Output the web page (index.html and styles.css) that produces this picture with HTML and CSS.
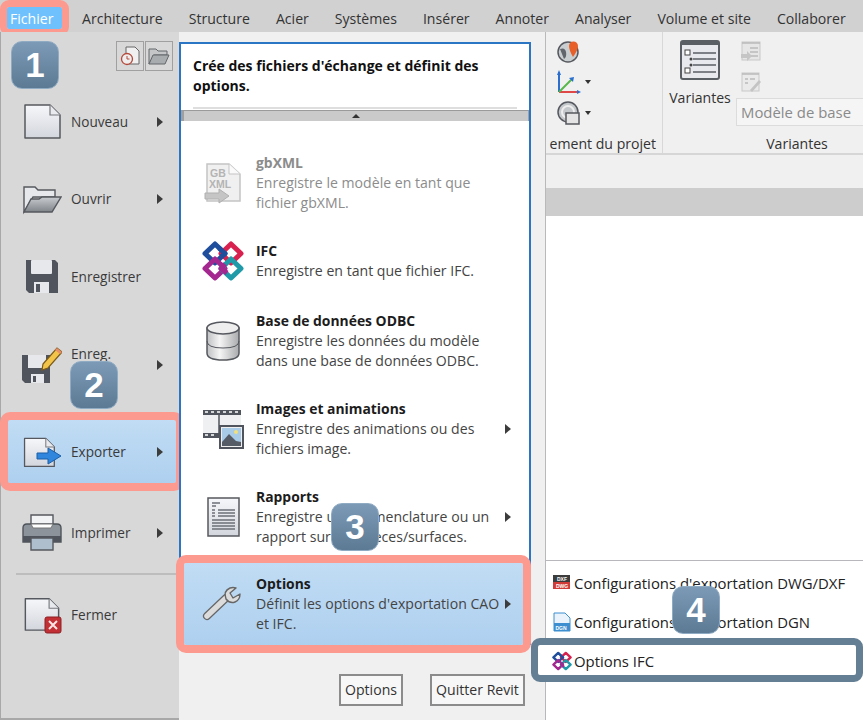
FILE: index.html
```html
<!DOCTYPE html>
<html lang="fr">
<head>
    <meta charset="utf-8">
    <title>Revit - Options IFC</title>
    <link rel="stylesheet" href="styles.css">
</head>
<body>
    <!-- Shared icon shapes -->
    <svg class="icon-defs" width="0" height="0">
        <defs>
            <linearGradient id="paper" x1="0" y1="0" x2="0" y2="1">
                <stop offset="0" stop-color="#f6f7fa"/>
                <stop offset="1" stop-color="#d3d6dd"/>
            </linearGradient>
            <linearGradient id="metal" x1="0" y1="0" x2="1" y2="0">
                <stop offset="0" stop-color="#bfc0c2"/>
                <stop offset="0.4" stop-color="#f5f5f5"/>
                <stop offset="1" stop-color="#a9aaac"/>
            </linearGradient>
            <linearGradient id="folder" x1="0" y1="0" x2="0" y2="1">
                <stop offset="0" stop-color="#c9ccd0"/>
                <stop offset="1" stop-color="#7f848a"/>
            </linearGradient>
            <symbol id="ifc" viewBox="0 0 42 42">
                <g fill="none" stroke-width="5" stroke-linejoin="round">
                    <path d="M13 4 23 13.500 13 23 3 13.500Z" stroke="#1f4e9c"/>
                    <path d="M29 4 39 13.500 29 23 19 13.500Z" stroke="#d9214f"/>
                    <path d="M13 19 23 28.500 13 38 3 28.500Z" stroke="#a3278f"/>
                    <path d="M29 19 39 28.500 29 38 19 28.500Z" stroke="#1e9aa8"/>
                    <path d="M17 8 23 13.500 19 17" stroke="#1f4e9c"/>
                    <path d="M25 33 19 28.500 23 24" stroke="#a3278f"/>
                </g>
            </symbol>
            <symbol id="doc" viewBox="0 0 40 40">
                <path d="M3 4H28L38 14V37H3Z" fill="url(#paper)" stroke="#55585e" stroke-width="1.500" stroke-linejoin="round"/>
                <path d="M28 4V14H38" fill="#e9eaee" stroke="#77797e" stroke-width="1.200"/>
            </symbol>
        </defs>
    </svg>

    <header class="tabs">
        <span class="tab tab-file">Fichier</span>
        <span class="tab">Architecture</span>
        <span class="tab">Structure</span>
        <span class="tab">Acier</span>
        <span class="tab">Systèmes</span>
        <span class="tab">Insérer</span>
        <span class="tab">Annoter</span>
        <span class="tab">Analyser</span>
        <span class="tab">Volume et site</span>
        <span class="tab">Collaborer</span>
    </header>

    <div class="workspace">
        <!-- Left column of the file menu -->
        <nav class="file-menu">
            <div class="recent-buttons">
                <span class="recent-button">
                    <svg width="24" height="24" viewBox="0 0 24 24"><path d="M8 3H17L21 7V20H8Z" fill="#f0f0f0" stroke="#666"/><circle cx="9" cy="15" r="5.500" fill="#eee" stroke="#b5483a" stroke-width="1.300"/><path d="M9 12V15H11.500" fill="none" stroke="#b5483a"/></svg>
                </span>
                <span class="recent-button">
                    <svg width="24" height="24" viewBox="0 0 24 24"><path d="M2 20V5H9L11 7H20V11H7L2 20Z" fill="#c4c6c8" stroke="#63666a"/><path d="M2 20 6 11H22L18 20Z" fill="#a9acaf" stroke="#63666a"/></svg>
                </span>
            </div>

            <div class="file-item file-item-first">
                <svg width="40" height="40" viewBox="0 0 40 40"><use href="#doc" y="-1"/></svg>
                <span class="file-label">Nouveau</span><i class="arrow"></i>
            </div>
            <div class="file-item file-item-near">
                <svg width="40" height="40" viewBox="0 0 40 40"><path d="M2 33V8H13L16 11H33V18H11L2 33Z" fill="#e6e8ec" stroke="#55585e" stroke-width="1.400"/><path d="M2 33 9 20H17L20 18H39L30 33Z" fill="url(#folder)" stroke="#55585e" stroke-width="1.400"/></svg>
                <span class="file-label">Ouvrir</span><i class="arrow"></i>
            </div>
            <div class="file-item">
                <svg width="40" height="40" viewBox="0 0 40 40">
                    <path d="M4 3H33L36 6V36H7L4 33Z" fill="#50555d"/>
                    <rect x="9" y="3" width="21" height="14" rx="1" fill="#e6e8ec"/>
                    <rect x="12" y="25" width="15" height="11" fill="#e6e8ec"/>
                    <rect x="14" y="27" width="4" height="8" fill="#50555d"/>
                </svg>
                <span class="file-label">Enregistrer</span>
            </div>
            <div class="file-item file-item-far">
                <svg width="40" height="40" viewBox="0 0 40 40">
                    <path d="M0 10H28V38H3L0 35Z" fill="#50555d"/>
                    <rect x="6" y="10" width="18" height="13" fill="#e6e8ec"/>
                    <rect x="9" y="29" width="13" height="9" fill="#e6e8ec"/>
                    <rect x="11" y="31" width="3" height="6" fill="#50555d"/>
                    <path d="M21 19 35 3 40 7 26 23 20 25Z" fill="#f2c54a" stroke="#7b5a1a" stroke-width="1.200"/>
                    <path d="M35 3 40 7 38 9 33 5Z" fill="#e58f6a"/>
                </svg>
                <span class="file-label file-label-wrap">Enreg.<br>sous</span><i class="arrow"></i>
            </div>
            <div class="file-item file-item-export file-item-active">
                <svg width="40" height="40" viewBox="0 0 40 40">
                    <use href="#doc" width="34" height="40"/>
                    <path d="M15 21H26V16L39 24 26 32V27H15Z" fill="#2f86dc" stroke="#1c5fa8"/>
                </svg>
                <span class="file-label">Exporter</span><i class="arrow"></i>
            </div>
            <div class="file-item file-item-print">
                <svg width="40" height="40" viewBox="0 0 40 40">
                    <path d="M9 2H31V14H9Z" fill="#f2f3f5" stroke="#55585e" stroke-width="1.400"/>
                    <path d="M1 15Q1 11 5 11H35Q39 11 39 15V29H1Z" fill="#8d939b" stroke="#4f545b" stroke-width="1.400"/>
                    <path d="M1 23H39V29H1Z" fill="#50555d"/>
                    <path d="M9 11H31L29 15H11Z" fill="#fff" stroke="#777"/>
                    <path d="M9 25H31V37H9Z" fill="#aebecc" stroke="#55585e" stroke-width="1.400"/>
                </svg>
                <span class="file-label">Imprimer</span><i class="arrow"></i>
            </div>
            <hr class="file-divider">
            <div class="file-item file-item-close">
                <svg width="40" height="40" viewBox="0 0 40 40">
                    <use href="#doc" width="39" height="38"/>
                    <rect x="23" y="22" width="16" height="16" rx="2" fill="#c22f35" stroke="#8e2025"/>
                    <path d="M27 26 35 34M35 26 27 34" stroke="#fbe4e4" stroke-width="2"/>
                </svg>
                <span class="file-label">Fermer</span>
            </div>
        </nav>

        <!-- Export panel with the descriptions -->
        <section class="export-column">
            <div class="export-panel">
                <div class="export-tip">
                    Crée des fichiers d'échange et définit des<br>options.
                    <div class="export-tip-rule"></div>
                </div>
                <div class="scroll-band"><i class="scroll-up"></i></div>

                <div class="export-item export-item-first export-item-off">
                    <svg width="42" height="42" viewBox="0 0 42 42">
                        <path d="M5 2H27L38 12V39H5Z" fill="#f0f0f0" stroke="#c4c4c4" stroke-width="1.500"/>
                        <path d="M27 2V12H38" fill="#fafafa" stroke="#c4c4c4"/>
                        <text x="8" y="15" class="icon-text">GB</text>
                        <text x="7" y="26" class="icon-text">XML</text>
                        <path d="M3 31H17V27L27 34 17 41V37H3Z" fill="#c5c5c5" stroke="#b0b0b0"/>
                    </svg>
                    <div class="export-text">
                        <b>gbXML</b>
                        <p>Enregistre le modèle en tant que<br>fichier gbXML.</p>
                    </div>
                </div>
                <div class="export-item export-item-ifc">
                    <svg width="42" height="42"><use href="#ifc"/></svg>
                    <div class="export-text">
                        <b>IFC</b>
                        <p>Enregistre en tant que fichier IFC.</p>
                    </div>
                </div>
                <div class="export-item export-item-db">
                    <svg width="42" height="42" viewBox="0 0 42 42">
                        <path d="M5 8V33Q5 40 21 40T37 33V8Z" fill="url(#metal)" stroke="#55585e" stroke-width="1.500"/>
                        <path d="M5 21Q5 28 21 28T37 21" fill="none" stroke="#55585e"/>
                        <ellipse cx="21" cy="8" rx="16" ry="6" fill="#eee" stroke="#55585e" stroke-width="1.500"/>
                    </svg>
                    <div class="export-text">
                        <b>Base de données ODBC</b>
                        <p>Enregistre les données du modèle<br>dans une base de données ODBC.</p>
                    </div>
                </div>
                <div class="export-item">
                    <svg width="42" height="42" viewBox="0 0 42 42">
                        <rect x="1" y="2" width="38" height="28" fill="#eef0f2"/>
                        <rect x="1" y="2" width="38" height="5" fill="#50555d"/>
                        <rect x="1" y="25" width="16" height="5" fill="#50555d"/>
                        <path d="M3 4H6M9 4H12M15 4H18M21 4H24M27 4H30M33 4H36M3 27H6M9 27H12" stroke="#fff" stroke-width="1.500"/>
                        <path d="M17 7V25" stroke="#50555d" stroke-width="1.500"/>
                        <rect x="18" y="18" width="23" height="22" fill="#eee" stroke="#50555d" stroke-width="2"/>
                        <rect x="20" y="20" width="19" height="18" fill="#a8cbe8"/>
                        <path d="M20 38V34L27 26 34 33 39 34V38Z" fill="#565c66"/>
                        <circle cx="34" cy="24" r="2" fill="#f3e07a"/>
                    </svg>
                    <div class="export-text">
                        <b>Images et animations</b>
                        <p>Enregistre des animations ou des<br>fichiers image.</p>
                    </div>
                    <i class="arrow"></i>
                </div>
                <div class="export-item">
                    <svg width="42" height="42" viewBox="0 0 42 42">
                        <rect x="6" y="2" width="31" height="38" fill="url(#paper)" stroke="#55585e" stroke-width="1.500"/>
                        <path d="M10 7H18M10 10H14M10 14H13M16 14H33M10 17H13M16 17H33M10 20H13M16 20H33M10 24H33M10 27H33M10 30H33M10 33H33" stroke="#6c7077" stroke-width="1.300"/>
                    </svg>
                    <div class="export-text">
                        <b>Rapports</b>
                        <p>Enregistre une nomenclature ou un<br>rapport sur des pièces/surfaces.</p>
                    </div>
                    <i class="arrow"></i>
                </div>
                <div class="export-item export-item-active">
                    <svg width="42" height="42" viewBox="0 0 42 42">
                        <path d="M5 33 24 15" stroke="#666" stroke-width="8" stroke-linecap="round"/>
                        <path d="M5 33 24 15" stroke="#dcdcdc" stroke-width="5.500" stroke-linecap="round"/>
                        <path d="M24 16Q21 8 28 5 31 4 34 5L28 10 31 15 38 11Q38 17 33 19 28 21 24 16Z" fill="#dcdcdc" stroke="#666" stroke-width="1.400" stroke-linejoin="round"/>
                    </svg>
                    <div class="export-text">
                        <b>Options</b>
                        <p>Définit les options d'exportation CAO<br>et IFC.</p>
                    </div>
                    <i class="arrow"></i>
                </div>
            </div>
            <div class="export-footer">
                <button class="footer-button footer-button-options">Options</button>
                <button class="footer-button footer-button-quit">Quitter Revit</button>
            </div>
        </section>

        <!-- Ribbon and drawing area behind the menu -->
        <main class="behind">
            <div class="ribbon">
                <div class="ribbon-panel ribbon-panel-project">
                    <div class="ribbon-tools">
                        <svg width="24" height="24" viewBox="0 0 24 24">
                            <circle cx="11" cy="13" r="10" fill="#c9ced1" stroke="#55585e" stroke-width="1.500"/>
                            <path d="M3 10Q8 8 9 13T7 20" fill="#60666c"/>
                            <path d="M16 18Q12 11 12 7A4.500 4.500 0 0 1 21 7Q21 11 16 18Z" fill="#e7602a"/>
                        </svg>
                        <span class="tool-drop">
                            <svg width="24" height="24" viewBox="0 0 24 24">
                                <path d="M2 2V22" stroke="#2a6ed0" stroke-width="2"/>
                                <path d="M2 22H22" stroke="#e04848" stroke-width="2"/>
                                <path d="M2 22 15 9" stroke="#55b848" stroke-width="2"/>
                                <path d="M0 5 2 0 4 5ZM20 20 24 22 20 24ZM12 8 17 7 16 12Z" fill="#2a6ed0"/>
                            </svg>
                            <i class="caret"></i>
                        </span>
                        <span class="tool-drop">
                            <svg width="24" height="24" viewBox="0 0 24 24">
                                <circle cx="11" cy="11" r="10" fill="#c4c8cb" stroke="#55585e" stroke-width="1.500"/>
                                <circle cx="11" cy="11" r="6" fill="none" stroke="#eee" stroke-width="2"/>
                                <rect x="9" y="12" width="13" height="11" fill="#e4e4e4" stroke="#55585e" stroke-width="1.500"/>
                            </svg>
                            <i class="caret"></i>
                        </span>
                    </div>
                    <div class="ribbon-label">ement du projet</div>
                </div>
                <div class="ribbon-panel ribbon-panel-variants">
                    <div class="variants-body">
                        <div class="variants-main">
                            <svg width="40" height="40" viewBox="0 0 40 40">
                                <rect x="1" y="1" width="38" height="38" rx="2" fill="#e8e9ee" stroke="#5a5f66" stroke-width="2"/>
                                <rect x="1" y="1" width="38" height="4" fill="#5a5f66"/>
                                <path d="M13 13H36M13 19H36M13 25H36M13 32H36" stroke="#5a5f66" stroke-width="1.600"/>
                                <rect x="5" y="10" width="5" height="5" fill="#fff" stroke="#444"/>
                                <rect x="5" y="28" width="5" height="5" fill="#fff" stroke="#444"/>
                                <circle cx="11" cy="19" r="1.500" fill="#444"/>
                                <circle cx="11" cy="25" r="1.500" fill="#444"/>
                            </svg>
                            <span>Variantes</span>
                        </div>
                        <div class="variants-side">
                            <svg class="tool-off" width="20" height="20" viewBox="0 0 20 20">
                                <rect x="1" y="1" width="18" height="18" fill="#e6e6e6" stroke="#c8c8c8"/>
                                <path d="M1 2H19M9 7H17M9 11H17M9 15H17" stroke="#bbb" stroke-width="1.500"/>
                                <path d="M0 13H6V10L11 15 6 20V17H0Z" fill="#c5c5c5"/>
                            </svg>
                            <svg class="tool-off" width="20" height="20" viewBox="0 0 20 20">
                                <rect x="1" y="1" width="17" height="18" fill="#eaeaea" stroke="#c8c8c8"/>
                                <path d="M1 2H18M4 7H7M9 7H14M4 11H7" stroke="#bbb" stroke-width="1.500"/>
                                <path d="M9 18 18 8 20 10 11 20Z" fill="#c4c4c4"/>
                            </svg>
                            <div class="variants-field">Modèle de base</div>
                        </div>
                    </div>
                    <div class="ribbon-label ribbon-label-center">Variantes</div>
                </div>
            </div>
            <div class="view-spacer"></div>
            <div class="view-tabs"></div>
            <div class="view-canvas"></div>
        </main>

        <!-- Options submenu -->
        <div class="flyout">
            <div class="flyout-item">
                <svg width="20" height="20" viewBox="0 0 20 20">
                    <rect x="1" y="2" width="17" height="7" fill="#3d3d3d"/>
                    <rect x="1" y="9" width="17" height="7" fill="#d23c36"/>
                    <text x="5" y="7.500" class="icon-text-tiny">DXF</text>
                    <text x="4" y="15" class="icon-text-tiny">DWG</text>
                </svg>
                Configurations d'exportation DWG/DXF
            </div>
            <div class="flyout-item">
                <svg width="20" height="20" viewBox="0 0 20 20">
                    <path d="M2 1H13L18 6V19H2Z" fill="#eaf3fb" stroke="#3d8fd0"/>
                    <rect x="2" y="11" width="16" height="8" fill="#3d8fd0"/>
                    <text x="3.500" y="17.500" class="icon-text-tiny">DGN</text>
                </svg>
                Configurations d'exportation DGN
            </div>
            <div class="flyout-item flyout-item-active">
                <svg width="20" height="20"><use href="#ifc" width="20" height="20"/></svg>
                Options IFC
            </div>
        </div>

        <span class="step step-one">1</span>
        <span class="step step-two">2</span>
        <span class="step step-three">3</span>
        <span class="step step-four">4</span>
    </div>
</body>
</html>
```

FILE: styles.css
```css
/* Page */
html, body {
    margin: 0;
    height: 720px;
    overflow: hidden;
}

body {
    font-family: "Open Sans", "Noto Sans", sans-serif;
    font-size: 14.1px;
    line-height: 20px;
    color: #333;
    background: #fff;
}

.icon-defs {
    display: block;
    height: 0;
}

.icon-text {
    font-family: "Liberation Sans", sans-serif;
    font-size: 10.500px;
    font-weight: bold;
    fill: #b4b4b4;
}

.icon-text-tiny {
    font-family: "Liberation Sans", sans-serif;
    font-size: 5px;
    font-weight: bold;
    fill: #fff;
}

svg {
    flex: none;
}

/* Tab strip */
.tabs {
    display: flex;
    gap: 26px;
    height: 32px;
    box-sizing: border-box;
    padding: 7px 0 0 7px;
    background: #d1d1d1;
    white-space: nowrap;
}

.tab {
    line-height: 24px;
}

.tab-file {
    width: 55px;
    height: 22px;
    box-sizing: border-box;
    margin-right: -6px;
    padding-left: 3px;
    line-height: 24px;
    color: #fff;
    background: #6fc1fd;
    outline: 7px solid #fd9a90;
    border-radius: 2px;
}

/* Layout under the tabs */
.workspace {
    position: relative;
    display: flex;
    height: 688px;
}

/* File menu */
.file-menu {
    width: 179px;
    flex: none;
    box-sizing: border-box;
    padding: 9px 0 0 8px;
    background: #d8d8d8;
    border-left: 1px solid #a8a8a8;
    border-bottom: 2px solid #a8a8a8;
}

.recent-buttons {
    display: flex;
    justify-content: flex-end;
    gap: 1px;
    height: 29px;
    margin-right: 6px;
}

.recent-button {
    width: 26px;
    height: 28px;
    display: flex;
    align-items: center;
    justify-content: center;
    border: 1px solid #a0a0a0;
}

.file-item {
    display: flex;
    align-items: center;
    width: 168px;
    height: 63px;
    margin-top: 15px;
    box-sizing: border-box;
    padding: 0 13px 0 14px;
    margin-left: -1px;
}

.file-item-first { margin-top: 20px; }
.file-item-near { margin-top: 14px; }
.file-item-far { margin-top: 25px; }
.file-item-export { margin-top: 24px; }
.file-item-print { margin-top: 18px; }
.file-item-close { margin-top: 8px; }

.file-label {
    flex: 1;
    margin-left: 9px;
    font-size: 13.600px;
    color: #3a3a3a;
}

.file-label-wrap {
    margin-top: -1px;
}

.file-item-active {
    background: linear-gradient(#c1dcf4, #aed0ef);
    outline: 8px solid #fd9a90;
    border-radius: 2px;
}

.file-divider {
    height: 0;
    margin: 9px 2px 0 7px;
    border: 0;
    border-top: 2px solid #bdbdbd;
}

.arrow {
    width: 0;
    height: 0;
    flex: none;
    border-left: 6px solid #3c3c3c;
    border-top: 5px solid transparent;
    border-bottom: 5px solid transparent;
}

/* Export panel */
.export-column {
    width: 367px;
    flex: none;
    box-sizing: border-box;
    padding-top: 10px;
    background: #f0f0f0;
    border-right: 1px solid #b9b9b9;
}

.export-panel {
    width: 352px;
    height: 603px;
    box-sizing: border-box;
    background: #fff;
    border: 2px solid #2a75c4;
    border-bottom: 0;
}

.export-tip {
    height: 66px;
    box-sizing: border-box;
    padding: 12px 0 0 12px;
    font-size: 14px;
    font-weight: 700;
    color: #111;
}

.export-tip-rule {
    margin: 11px 12px 0 0;
    border-top: 2px solid #dedede;
}

.scroll-band {
    display: flex;
    justify-content: center;
    align-items: center;
    height: 11px;
    box-sizing: border-box;
    background: #cacaca;
    border-top: 1px solid #9a9a9a;
    border-left: 3px solid #a0a0a0;
    border-right: 1px solid #a0a0a0;
}

.scroll-up {
    width: 0;
    height: 0;
    border-left: 4px solid transparent;
    border-right: 4px solid transparent;
    border-bottom: 4px solid #333;
}

.export-item {
    display: flex;
    align-items: center;
    gap: 12px;
    width: 339px;
    margin-top: 28px;
    margin-left: 3px;
    box-sizing: border-box;
    padding-left: 18px;
}

.export-item-first { margin-top: 32px; }
.export-item-ifc { margin-top: 27px; }
.export-item-db { margin-top: 29px; }

.export-text {
    flex: 1;
    min-width: 0;
    color: #444;
    white-space: nowrap;
}

.export-text b {
    display: block;
    font-size: 13.900px;
    color: #1c1c1c;
}

.export-text p {
    margin: 0;
}

.export-item-off .export-text,
.export-item-off .export-text b {
    color: #8c8c8c;
}

.export-item .arrow {
    margin-right: 12px;
}

.export-item-active {
    height: 82px;
    margin-top: 16px;
    padding-bottom: 1px;
    background: linear-gradient(#c1dcf4, #aed0ef);
    outline: 8px solid #fd9a90;
    border-radius: 2px;
}

.export-footer {
    display: flex;
    justify-content: flex-end;
    gap: 27px;
    padding: 29px 20px 0 0;
}

.footer-button {
    height: 32px;
    padding: 0;
    font: inherit;
    color: #333;
    background: #f7f7f7;
    border: 2px solid #8c8c8c;
    border-radius: 0;
}

.footer-button-options { width: 64px; }
.footer-button-quit { width: 95px; }

/* Ribbon and view behind the menu */
.behind {
    flex: 1;
    min-width: 0;
    display: flex;
    flex-direction: column;
    overflow: hidden;
}

.ribbon {
    display: flex;
    height: 123px;
    flex: none;
    box-sizing: border-box;
    background: #f0f0f0;
    border-bottom: 2px solid #d6d6d6;
}

.ribbon-panel {
    display: flex;
    flex-direction: column;
}

.ribbon-panel-project {
    width: 117px;
    flex: none;
    border-right: 1px solid #d8d8d8;
    box-sizing: border-box;
}

.ribbon-panel-variants {
    flex: 1;
    min-width: 0;
}

.ribbon-tools {
    flex: 1;
    display: flex;
    flex-direction: column;
    gap: 7px;
    padding: 7px 0 0 11px;
}

.tool-drop {
    display: flex;
    align-items: center;
    gap: 4px;
}

.caret {
    width: 0;
    height: 0;
    border-left: 3.500px solid transparent;
    border-right: 3.500px solid transparent;
    border-top: 4px solid #333;
}

.ribbon-label {
    display: flex;
    justify-content: flex-end;
    height: 19px;
    padding: 0 6px 0 0;
    white-space: nowrap;
}

.ribbon-label-center {
    justify-content: center;
    padding: 0 0 0 68px;
}

.variants-body {
    flex: 1;
    display: flex;
    gap: 5px;
    padding: 8px 0 0 6px;
}

.variants-main {
    width: 62px;
    flex: none;
    display: flex;
    flex-direction: column;
    align-items: center;
    gap: 8px;
}

.variants-main span {
    white-space: nowrap;
}

.variants-side {
    flex: 1;
    min-width: 0;
    display: flex;
    flex-direction: column;
    gap: 10px;
}

.tool-off {
    margin: 1px 0 0 5px;
    display: block;
}

.variants-field {
    height: 28px;
    box-sizing: border-box;
    margin-top: -4px;
    padding-left: 4px;
    font-size: 14.900px;
    line-height: 27px;
    color: #8a8a8a;
    white-space: nowrap;
    background: #f5f5f5;
    border: 1px solid #dcdcdc;
    border-right: 0;
}

.view-spacer {
    height: 33px;
    flex: none;
    background: #f0f0f0;
}

.view-tabs {
    height: 28px;
    flex: none;
    background: #cdcdcd;
}

.view-canvas {
    flex: 1;
    background: #fff;
}

/* Options submenu */
.flyout {
    position: absolute;
    left: 545px;
    right: 0;
    top: 528px;
    bottom: 0;
    padding-top: 2px;
    font-size: 14.900px;
    background: #fff;
    border-top: 1px solid #b8b8bc;
    border-left: 1px solid #b8b8bc;
}

.flyout-item {
    display: flex;
    align-items: center;
    gap: 2px;
    height: 39px;
    padding-left: 6px;
    color: #222;
    white-space: nowrap;
}

.flyout-item-active {
    height: 30px;
    width: 318px;
    margin: 4px 0 0 -8px;
    padding: 2px 0 0 14px;
    box-sizing: border-box;
    background: #fff;
    outline: 7px solid #647f94;
    border-radius: 2px;
}

/* Numbered step badges */
.step {
    position: absolute;
    width: 48px;
    height: 48px;
    box-sizing: border-box;
    display: flex;
    align-items: center;
    justify-content: center;
    font-family: "Liberation Sans", sans-serif;
    font-size: 35px;
    font-weight: bold;
    color: #fff;
    background: linear-gradient(#7c9ab6, #5d7a94);
    border: 1px solid #8fabc3;
    border-radius: 11px;
}

.step-one { left: 11px; top: 9px; }
.step-two { left: 70px; top: 329px; }
.step-three { left: 331px; top: 471px; }
.step-four { left: 672px; top: 554px; }
```
